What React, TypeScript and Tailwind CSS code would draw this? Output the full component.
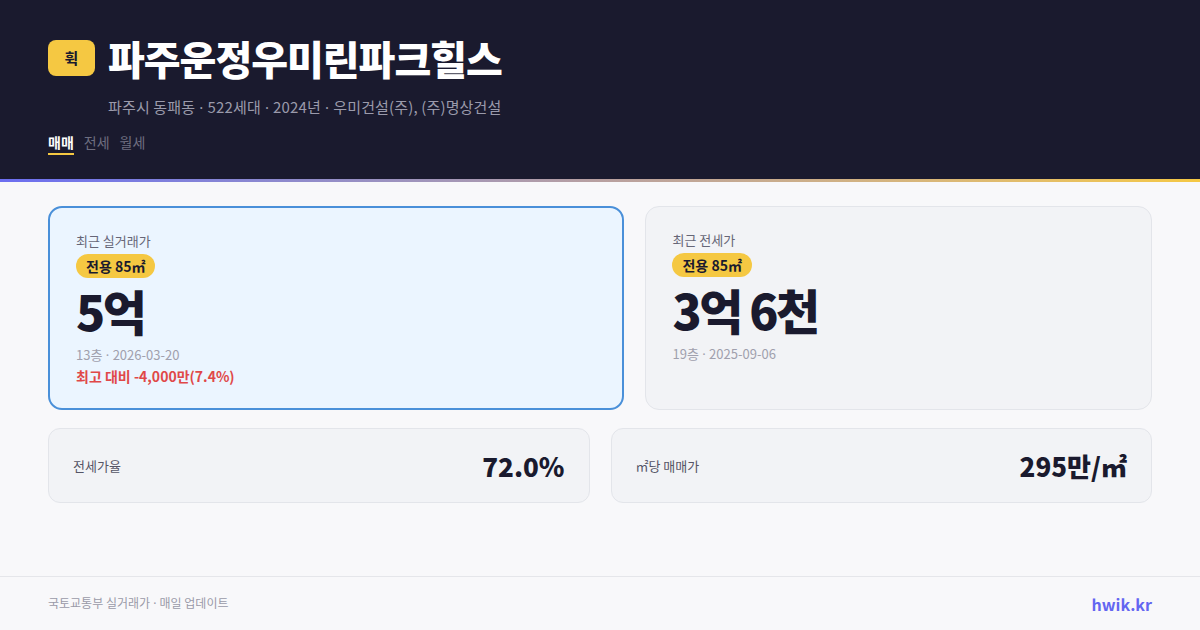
import React from "react";

const F = { fontFamily: '"Noto Sans CJK KR", "Noto Sans", sans-serif' };

function Dot() {
  return <span className="font-['Noto_Sans',sans-serif]"> · </span>;
}

export default function App() {
  return (
    <div className="w-[1200px] h-[630px] flex flex-col bg-[#f8f8fa] overflow-hidden" style={F}>
      <header className="h-[179px] bg-[#1a1a2e] px-12 pt-[36px] flex flex-col shrink-0">
        <div className="flex items-center gap-[13px]">
          <div className="w-[47px] h-[36px] rounded-[8px] bg-[#f5c842] flex items-center justify-center text-[15px] font-bold text-[#1a1a2e]">휙</div>
          <h1 className="text-[40px] leading-[44px] font-black text-white tracking-[-1px]">파주운정우미린파크힐스</h1>
        </div>
        <div className="pl-[60px] mt-[17px] text-[15px] leading-[20px] text-[#9a9aab] tracking-[0.15px]">
          파주시 동패동<Dot />522세대<Dot />2024년<Dot />우미건설(주), (주)명상건설
        </div>
        <div className="flex gap-[10px] mt-[15px] text-[14px] leading-[20px]">
          <div className="flex flex-col">
            <span className="font-bold text-white">매매</span>
            <span className="h-[2px] bg-[#f5c842] mt-[1px]"></span>
          </div>
          <span className="text-[#6e6e80]">전세</span>
          <span className="text-[#6e6e80]">월세</span>
        </div>
      </header>
      <div className="h-[3px] bg-gradient-to-r from-[#6c6ef0] via-[#b8a0a0] to-[#f5c842] shrink-0"></div>
      <main className="flex-1 px-12 pt-[24px] flex flex-col gap-[18px]">
        <div className="flex gap-[21px]">
          <div className="w-[577px] h-[204px] rounded-[14px] border-2 border-[#4a90d9] bg-[#ebf5ff] px-[26px] pt-[23px]">
            <div className="text-[13px] leading-[20px] text-[#666677]">최근 실거래가</div>
            <div className="inline-block mt-[3px] px-[10px] h-[24px] leading-[24px] rounded-full bg-[#f5c842] text-[14px] font-bold text-[#1a1a2e]">전용 85㎡</div>
            <div className="text-[48px] leading-[60px] font-black text-[#1a1a2e] tracking-[-2.5px] mt-[2px]">5억</div>
            <div className="text-[13px] leading-[18px] text-[#a0a0ad] mt-[6px]">13층<Dot />2026-03-20</div>
            <div className="text-[14px] leading-[20px] font-bold text-[#e04848] mt-[2px]">최고 대비 -4,000만(7.4%)</div>
          </div>
          <div className="w-[507px] h-[204px] rounded-[14px] border border-[#e3e5ea] bg-[#f2f3f6] px-[26px] pt-[23px]">
            <div className="text-[13px] leading-[20px] text-[#666677]">최근 전세가</div>
            <div className="inline-block mt-[3px] px-[10px] h-[24px] leading-[24px] rounded-full bg-[#f5c842] text-[14px] font-bold text-[#1a1a2e]">전용 85㎡</div>
            <div className="text-[48px] leading-[60px] font-black text-[#1a1a2e] tracking-[-2.5px] mt-[2px]">3억 6천</div>
            <div className="text-[13px] leading-[18px] text-[#a0a0ad] mt-[6px]">19층<Dot />2025-09-06</div>
          </div>
        </div>
        <div className="flex gap-[21px]">
          <div className="flex-1 h-[75px] rounded-[12px] border border-[#e3e5ea] bg-[#f2f3f6] px-6 flex items-center justify-between">
            <span className="text-[13px] text-[#555566]">전세가율</span>
            <span className="text-[26px] font-black text-[#1a1a2e]">72.0%</span>
          </div>
          <div className="flex-1 h-[75px] rounded-[12px] border border-[#e3e5ea] bg-[#f2f3f6] px-6 flex items-center justify-between">
            <span className="text-[13px] text-[#555566]">㎡당 매매가</span>
            <span className="text-[26px] font-black text-[#1a1a2e]">295만/㎡</span>
          </div>
        </div>
      </main>
      <footer className="h-[54px] border-t border-[#e5e6ea] px-12 flex items-center justify-between shrink-0">
        <span className="text-[12px] text-[#9a9aa8]">국토교통부 실거래가<Dot />매일 업데이트</span>
        <span className="text-[16px] font-bold text-[#6366f1]">hwik.kr</span>
      </footer>
    </div>
  );
}
